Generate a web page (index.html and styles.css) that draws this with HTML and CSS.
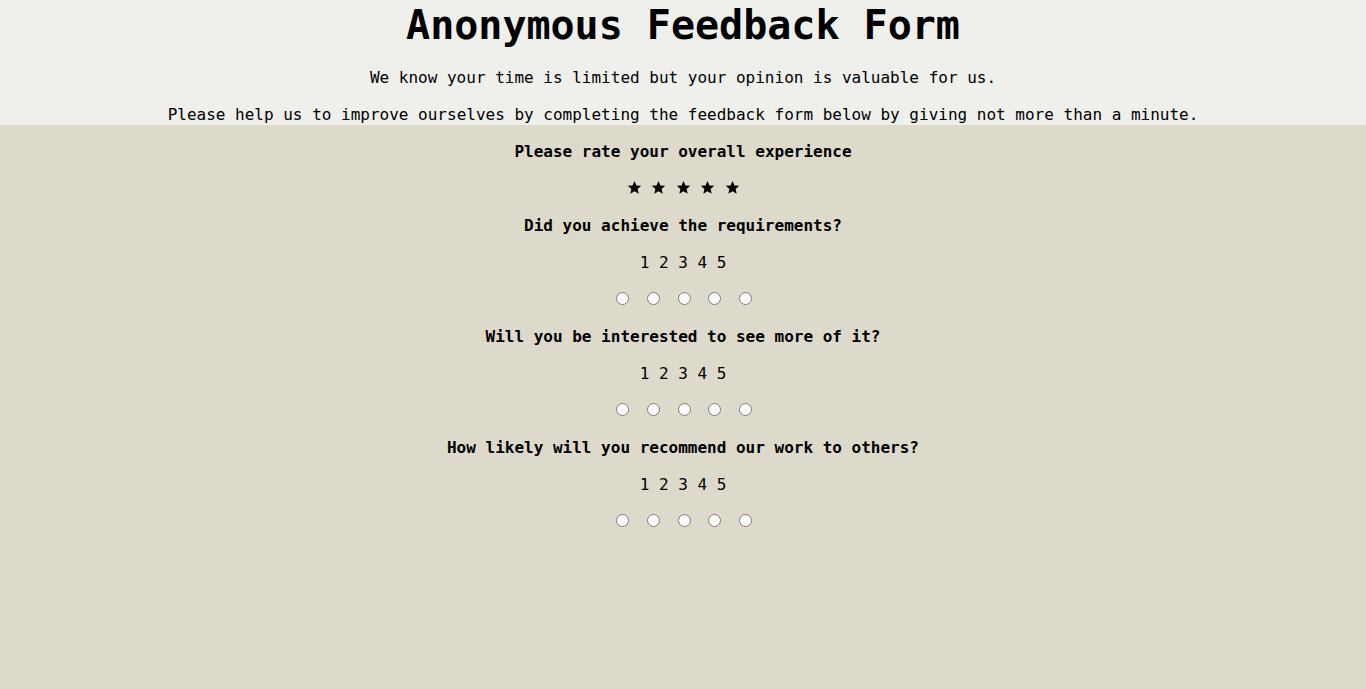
FILE: index.html
```html
<!DOCTYPE html>
<html lang="en">
<head>
<meta charset="utf-8">
<title>Anonymous Feedback Form</title>
<link rel="stylesheet" href="styles.css">
</head>
<body>
<header class="intro">
  <h1 class="title">Anonymous Feedback Form</h1>
  <p class="line">We know your time is limited but your opinion is valuable for us.</p>
  <p class="line last">Please help us to improve ourselves by completing the feedback form below by giving not more than a minute.</p>
</header>
<main class="form">
  <p class="question">Please rate your overall experience</p>
  <div class="stars">
    <svg class="star" viewBox="0 0 24 24"><path d="M12 1.5l3.1 7.2 7.7.6-5.9 5.1 1.8 7.6L12 17.9 5.3 22l1.8-7.6L1.2 9.3l7.7-.6z"/></svg>
    <svg class="star" viewBox="0 0 24 24"><path d="M12 1.5l3.1 7.2 7.7.6-5.9 5.1 1.8 7.6L12 17.9 5.3 22l1.8-7.6L1.2 9.3l7.7-.6z"/></svg>
    <svg class="star" viewBox="0 0 24 24"><path d="M12 1.5l3.1 7.2 7.7.6-5.9 5.1 1.8 7.6L12 17.9 5.3 22l1.8-7.6L1.2 9.3l7.7-.6z"/></svg>
    <svg class="star" viewBox="0 0 24 24"><path d="M12 1.5l3.1 7.2 7.7.6-5.9 5.1 1.8 7.6L12 17.9 5.3 22l1.8-7.6L1.2 9.3l7.7-.6z"/></svg>
    <svg class="star" viewBox="0 0 24 24"><path d="M12 1.5l3.1 7.2 7.7.6-5.9 5.1 1.8 7.6L12 17.9 5.3 22l1.8-7.6L1.2 9.3l7.7-.6z"/></svg>
  </div>

  <p class="question">Did you achieve the requirements?</p>
  <p class="scale">1 2 3 4 5</p>
  <p class="radios"><input type="radio" name="q1"> <input type="radio" name="q1"> <input type="radio" name="q1"> <input type="radio" name="q1"> <input type="radio" name="q1"></p>

  <p class="question">Will you be interested to see more of it?</p>
  <p class="scale">1 2 3 4 5</p>
  <p class="radios"><input type="radio" name="q2"> <input type="radio" name="q2"> <input type="radio" name="q2"> <input type="radio" name="q2"> <input type="radio" name="q2"></p>

  <p class="question">How likely will you recommend our work to others?</p>
  <p class="scale">1 2 3 4 5</p>
  <p class="radios"><input type="radio" name="q3"> <input type="radio" name="q3"> <input type="radio" name="q3"> <input type="radio" name="q3"> <input type="radio" name="q3"></p>
</main>
</body>
</html>
```

FILE: styles.css
```css
html, body {
  margin: 0;
  padding: 0;
}
body {
  background: #dddacc;
  color: #000;
  font-family: "DejaVu Sans Mono", "Liberation Mono", monospace;
  font-size: 16px;
  line-height: 21px;
  text-align: center;
  min-height: 689px;
}
.intro {
  background: #efefeb;
  padding: 0;
  display: flow-root;
}
.title {
  margin: 0;
  font-size: 40px;
  line-height: 51px;
  font-weight: bold;
}
.line {
  margin: 16px 0 0;
}
.line.last {
  margin-bottom: 0;
}
.form {
  display: flow-root;
}
.form p {
  margin: 16px 0;
}
.question {
  font-weight: bold;
}
.stars {
  display: flex;
  justify-content: center;
  gap: 9.5px;
  height: 21px;
  align-items: flex-start;
  margin: 16px 0;
}
.star {
  width: 15px;
  height: 15px;
  margin-top: 2px;
  fill: #000;
}
.form .radios {
  height: 21px;
  line-height: 21px;
}
.radios input {
  vertical-align: top;
  margin: 3px 3px 0 5px;
  width: 13px;
  height: 13px;
}
```
